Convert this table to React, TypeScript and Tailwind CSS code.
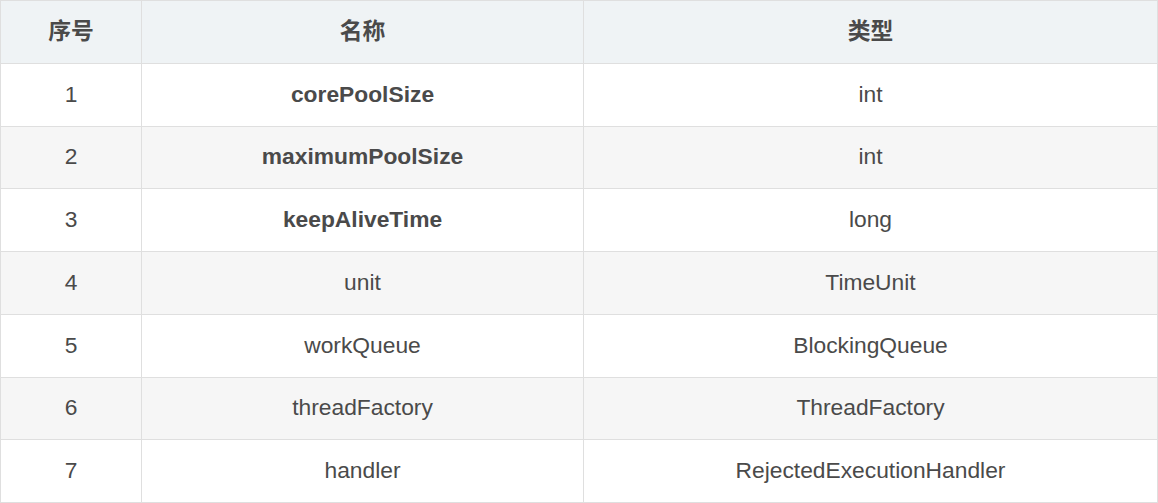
const rows = [
  { no: "1", name: "corePoolSize", type: "int", bold: true },
  { no: "2", name: "maximumPoolSize", type: "int", bold: true },
  { no: "3", name: "keepAliveTime", type: "long", bold: true },
  { no: "4", name: "unit", type: "TimeUnit", bold: false },
  { no: "5", name: "workQueue", type: "BlockingQueue", bold: false },
  { no: "6", name: "threadFactory", type: "ThreadFactory", bold: false },
  { no: "7", name: "handler", type: "RejectedExecutionHandler", bold: false },
];

export default function App() {
  return (
    <div className="w-[1158px] h-[503px] bg-white">
      <table
        className="w-[1158px] table-fixed border-collapse text-[22.8px] text-[#4a4a4a] text-center"
        style={{ fontFamily: '"Liberation Sans", Arial, "Noto Sans CJK SC", sans-serif' }}
      >
        <colgroup>
          <col className="w-[141px]" />
          <col className="w-[442px]" />
          <col />
        </colgroup>
        <thead>
          <tr className="bg-[#eff3f5] h-[62.75px]">
            <th className="border border-[#dfdfdf] font-bold pb-[2px]">序号</th>
            <th className="border border-[#dfdfdf] font-bold pb-[2px]">名称</th>
            <th className="border border-[#dfdfdf] font-bold pb-[2px]">类型</th>
          </tr>
        </thead>
        <tbody>
          {rows.map((r, i) => (
            <tr key={r.no} className={"h-[62.75px] " + (i % 2 === 1 ? "bg-[#f6f6f6]" : "bg-white")}>
              <td className="border border-[#dfdfdf] pb-[2px]">{r.no}</td>
              <td className={"border border-[#dfdfdf] pb-[2px] " + (r.bold ? "font-bold" : "")}>{r.name}</td>
              <td className="border border-[#dfdfdf] pb-[2px]">{r.type}</td>
            </tr>
          ))}
        </tbody>
      </table>
    </div>
  );
}
